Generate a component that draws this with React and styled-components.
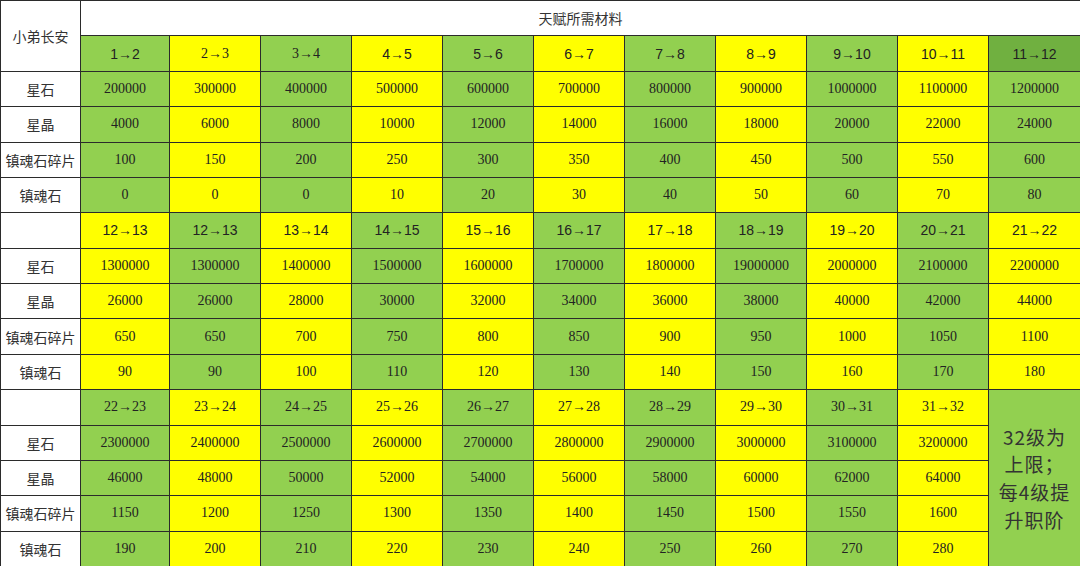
import React from 'react';
import styled, { createGlobalStyle } from 'styled-components';

const GlobalStyle = createGlobalStyle`
  html, body {
    margin: 0;
    padding: 0;
    background: #fff;
  }
  body {
    width: 1080px;
    height: 566px;
    overflow: hidden;
  }
`;

const colors = {
  green: '#92d050',
  yellow: '#ffff00',
  dark: '#70b040',
  white: '#ffffff',
};

const Sheet = styled.div`
  box-sizing: border-box;
  width: 1080px;
  height: 566px;
  padding: 1px 0 0 1px;
  display: grid;
  grid-template-columns: 79px 88px repeat(9, 90px) 1fr;
  grid-template-rows: repeat(16, 1fr);
  gap: 1px;
  background: #2b2b2b;
  color: #222;
`;

const Cell = styled.div`
  display: flex;
  align-items: center;
  justify-content: center;
  background: ${(p) => colors[p.$bg || 'white']};
  font-family: ${(p) =>
    p.$sans
      ? '"Liberation Sans", Arial, "Noto Sans CJK SC", sans-serif'
      : '"Liberation Serif", "Noto Sans CJK SC", serif'};
  font-size: 14px;
  white-space: nowrap;
`;

const Label = styled(Cell)`
  font-family: "Noto Sans CJK SC", sans-serif;
  color: #333;
`;

const Title = styled(Label)`
  grid-column: span 11;
`;

const Corner = styled(Label)`
  grid-row: span 2;
`;

const Note = styled(Cell)`
  grid-row: span 5;
  flex-direction: column;
  font-family: "Noto Sans CJK SC", sans-serif;
  font-size: 19px;
  letter-spacing: 1px;
  color: #333;
`;

const NoteLine = styled.span`
  display: block;
  line-height: 27.6px;
`;

const labels = ['星石', '星晶', '镇魂石碎片', '镇魂石'];

const range = (from, step, n) => Array.from({ length: n }, (_, i) => from + step * i);

const blocks = [
  {
    heads: range(1, 1, 11).map((n) => `${n}→${n + 1}`),
    serifHeads: [1, 2],
    first: 'green',
    rows: [
      range(200000, 100000, 11),
      range(4000, 2000, 11),
      range(100, 50, 11),
      [0, 0, 0, 10, 20, 30, 40, 50, 60, 70, 80],
    ],
  },
  {
    heads: ['12→13', ...range(12, 1, 10).map((n) => `${n}→${n + 1}`)],
    serifHeads: [],
    first: 'yellow',
    rows: [
      [1300000, 1300000, 1400000, 1500000, 1600000, 1700000, 1800000, 19000000, 2000000, 2100000, 2200000],
      [26000, ...range(26000, 2000, 10)],
      [650, ...range(650, 50, 10)],
      [90, ...range(90, 10, 10)],
    ],
  },
  {
    heads: range(22, 1, 10).map((n) => `${n}→${n + 1}`),
    serifHeads: range(0, 1, 10),
    first: 'green',
    note: ['32级为', '上限；', '每4级提', '升职阶'],
    rows: [
      range(2300000, 100000, 10),
      range(46000, 2000, 10),
      range(1150, 50, 10),
      range(190, 10, 10),
    ],
  },
];

const colour = (block, i) => {
  const other = block.first === 'green' ? 'yellow' : 'green';
  return i % 2 === 0 ? block.first : other;
};

export default function App() {
  return (
    <>
      <GlobalStyle />
      <Sheet>
        <Corner>小弟长安</Corner>
        <Title>天赋所需材料</Title>
        {blocks.map((block, b) => (
          <React.Fragment key={b}>
            {b > 0 && <Label />}
            {block.heads.map((h, i) => (
              <Cell
                key={h + i}
                $sans={!block.serifHeads.includes(i)}
                $bg={b === 0 && i === 10 ? 'dark' : colour(block, i)}
              >
                {h}
              </Cell>
            ))}
            {block.note && (
              <Note $bg="green">
                {block.note.map((line) => (
                  <NoteLine key={line}>{line}</NoteLine>
                ))}
              </Note>
            )}
            {block.rows.map((row, r) => (
              <React.Fragment key={r}>
                <Label>{labels[r]}</Label>
                {row.map((v, i) => (
                  <Cell key={i} $bg={colour(block, i)}>
                    {v}
                  </Cell>
                ))}
              </React.Fragment>
            ))}
          </React.Fragment>
        ))}
      </Sheet>
    </>
  );
}
